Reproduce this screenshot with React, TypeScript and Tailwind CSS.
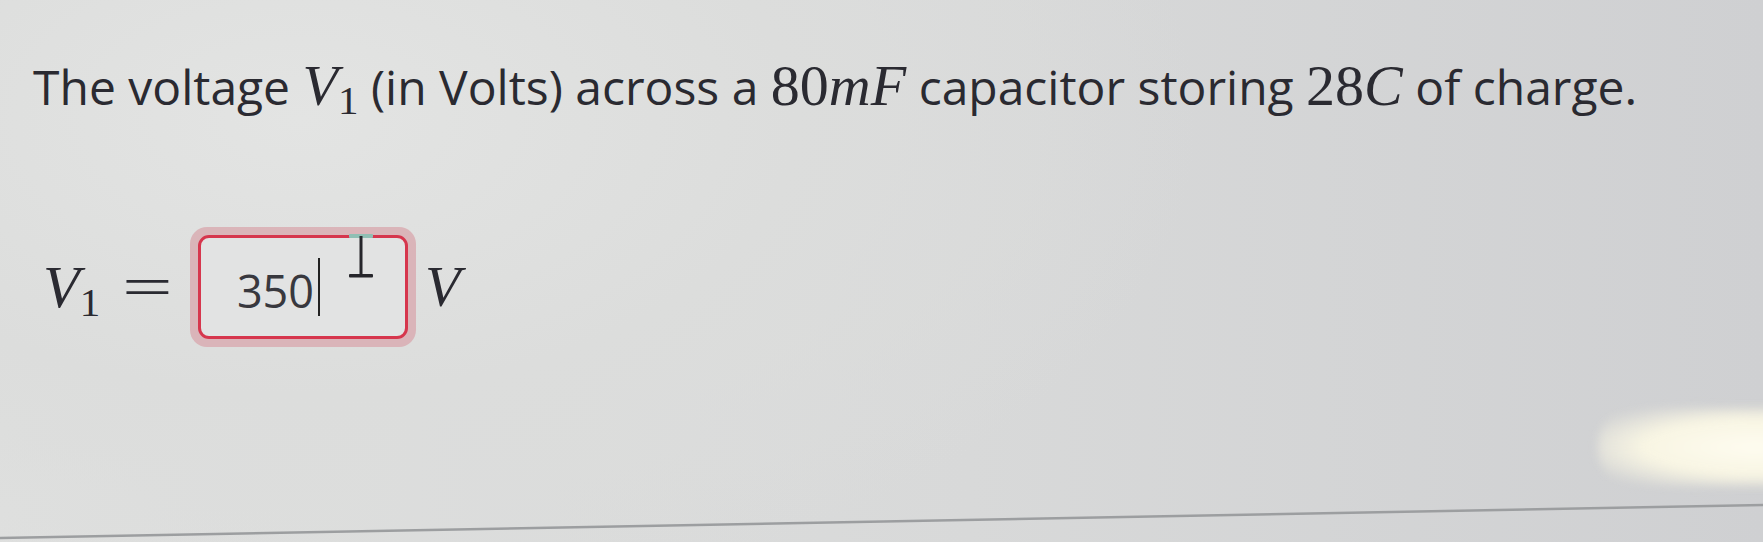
import React from "react";

const serif = { fontFamily: '"Liberation Serif", serif' };

const M = ({ children }: { children: React.ReactNode }) => (
  <span className="text-[58px] leading-none" style={serif}>{children}</span>
);

export default function App() {
  return (
    <div
      className="relative w-[1763px] h-[542px] overflow-hidden text-[#2a2a31]"
      style={{
        background:
          "radial-gradient(ellipse 900px 500px at 300px 120px, #e3e4e3 0%, #dcdddc 55%, rgba(0,0,0,0) 100%), linear-gradient(90deg, #dfe0df 0%, #d8d9d9 55%, #cfd0d2 100%)",
        fontFamily: '"Open Sans", sans-serif',
      }}
    >
      <div className="pl-[33px] pt-[57px]">
        <div className="flex items-baseline text-[48px] leading-none whitespace-pre">
          <span>The voltage </span>
          <M>
            <i>V</i>
            <span className="text-[41px] relative top-[9px]">1</span>
          </M>
          <span> (in Volts) across a </span>
          <M>
            80<i>mF</i>
          </M>
          <span> capacitor storing </span>
          <M>
            28<i>C</i>
          </M>
          <span> of charge.</span>
        </div>

        <div className="flex items-center mt-[112px]">
          <div className="flex items-baseline ml-[10px]" style={serif}>
            <i className="text-[60px] leading-none">V</i>
            <span className="text-[41px] leading-none relative top-[9px]">1</span>
          </div>
          <span className="inline-block text-[58px] leading-none ml-[31px] scale-x-[1.55]" style={serif}>=</span>
          <div className="ml-[26px] rounded-[17px] p-[8px] bg-[#d8a5ac]/75">
            <div className="relative w-[210px] h-[104px] rounded-[11px] border-[3px] border-[#d6364d] bg-[#e2e3e3] flex items-center">
              <span className="ml-[36px] text-[45px] leading-none text-[#38383e] relative top-[3px]">350</span>
              <span className="absolute left-[117px] top-[20px] w-[2px] h-[58px] bg-[#222]" />
              <svg className="absolute left-[146px] top-[-5px]" width="28" height="48" viewBox="0 0 28 48">
                <rect x="2" y="1" width="24" height="4" rx="1" fill="#8fbfb4" />
                <rect x="12.5" y="3" width="3" height="40" fill="#26262b" />
                <rect x="2" y="41" width="24" height="3.5" rx="1" fill="#26262b" />
              </svg>
            </div>
          </div>
          <i className="text-[58px] leading-none ml-[9px]" style={serif}>V</i>
        </div>
      </div>

      <div
        className="absolute left-[1598px] top-[408px] w-[240px] h-[78px] rounded-[36px] blur-[5px]"
        style={{ background: "radial-gradient(ellipse at 65% 50%, #fefcf0 0%, #f8f5e3 50%, rgba(240,238,220,0) 88%)" }}
      />
      <svg className="absolute left-0 top-0" width="1763" height="542">
        <line x1="0" y1="538" x2="1763" y2="505" stroke="#9c9ea0" strokeWidth="2.5" />
      </svg>
    </div>
  );
}
